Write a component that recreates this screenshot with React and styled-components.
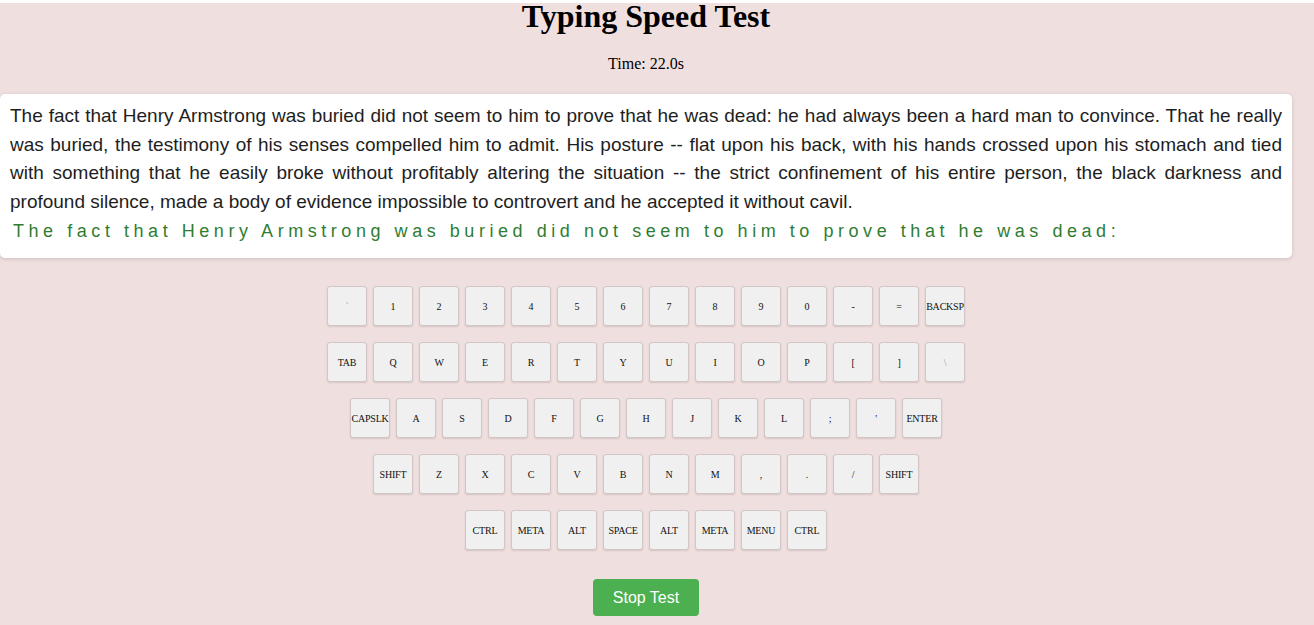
import React from "react";
import styled, { createGlobalStyle } from "styled-components";

const GlobalStyle = createGlobalStyle`
  html, body {
    margin: 0;
    padding: 0;
    background: #f0dfdf;
  }
  body {
    font-family: "Liberation Serif", "Times New Roman", serif;
    border-top: 3px solid #ffffff;
  }
`;

const Page = styled.div`
  width: 1292px;
  display: flex;
  flex-direction: column;
  align-items: center;
`;

const Title = styled.h1`
  margin: -3px 0 0;
  font-size: 32px;
  line-height: 32px;
  font-weight: bold;
  color: #000;
`;

const Timer = styled.p`
  margin: 23px 0 21px;
  font-size: 16px;
  color: #000;
`;

const TextBox = styled.div`
  align-self: stretch;
  background: #fff;
  border-radius: 5px;
  box-shadow: 0 1px 4px rgba(0, 0, 0, 0.15);
  padding: 8px 10px 12px;
  font-family: "Liberation Sans", Arial, sans-serif;
`;

const Passage = styled.p`
  margin: 0;
  font-size: 19px;
  line-height: 28.6px;
  text-align: justify;
  color: #1e1e1e;
`;

const Typed = styled.p`
  margin: 0;
  font-size: 18px;
  line-height: 30px;
  letter-spacing: 4.55px;
  color: #2f7d32;
  padding-left: 3px;
`;

const Keyboard = styled.div`
  margin-top: 28px;
  display: flex;
  flex-direction: column;
  align-items: center;
  gap: 16px;
`;

const Row = styled.div`
  display: flex;
  gap: 6px;
`;

const Key = styled.div`
  width: 40px;
  height: 40px;
  box-sizing: border-box;
  display: flex;
  align-items: center;
  justify-content: center;
  background: #f0f0f0;
  border: 1px solid #d2c6c6;
  border-radius: 3px;
  box-shadow: 0 1px 2px rgba(0, 0, 0, 0.12);
  font-size: 10px;
  color: ${(p) => (p.$faint ? "#999" : "#111")};
  white-space: nowrap;
  letter-spacing: -0.2px;
`;

const StopButton = styled.button`
  margin-top: 29px;
  padding: 9px 20px;
  background: #4caf50;
  color: #fff;
  border: none;
  border-radius: 4px;
  font-family: "Liberation Sans", Arial, sans-serif;
  font-size: 16px;
  line-height: 19px;
  cursor: pointer;
`;

const rows = [
  ["`", "1", "2", "3", "4", "5", "6", "7", "8", "9", "0", "-", "=", "BACKSP"],
  ["TAB", "Q", "W", "E", "R", "T", "Y", "U", "I", "O", "P", "[", "]", "\\"],
  ["CAPSLK", "A", "S", "D", "F", "G", "H", "J", "K", "L", ";", "'", "ENTER"],
  ["SHIFT", "Z", "X", "C", "V", "B", "N", "M", ",", ".", "/", "SHIFT"],
  ["CTRL", "META", "ALT", "SPACE", "ALT", "META", "MENU", "CTRL"],
];

const passage =
  "The fact that Henry Armstrong was buried did not seem to him to prove that he was dead: he had always been a hard man to convince. That he really was buried, the testimony of his senses compelled him to admit. His posture -- flat upon his back, with his hands crossed upon his stomach and tied with something that he easily broke without profitably altering the situation -- the strict confinement of his entire person, the black darkness and profound silence, made a body of evidence impossible to controvert and he accepted it without cavil.";

const typed =
  "The fact that Henry Armstrong was buried did not seem to him to prove that he was dead:";

export default function App() {
  return (
    <>
      <GlobalStyle />
      <Page>
        <Title>Typing Speed Test</Title>
        <Timer>Time: 22.0s</Timer>
        <TextBox>
          <Passage>{passage}</Passage>
          <Typed>{typed}</Typed>
        </TextBox>
        <Keyboard>
          {rows.map((row, i) => (
            <Row key={i}>
              {row.map((k, j) => (
                <Key key={j} $faint={k === "\\" || k === "`"}>
                  {k}
                </Key>
              ))}
            </Row>
          ))}
        </Keyboard>
        <StopButton>Stop Test</StopButton>
      </Page>
    </>
  );
}
